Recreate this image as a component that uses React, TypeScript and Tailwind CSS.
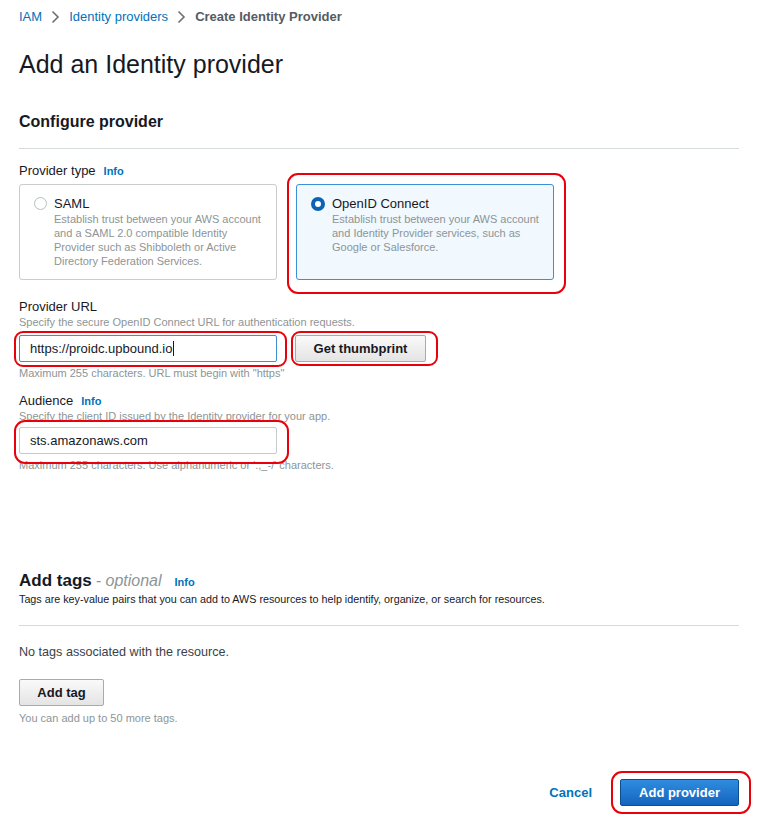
import React from "react";

const font = { fontFamily: '"Liberation Sans", Arial, sans-serif' };

const Chevron = () => (
    <svg width="9" height="14" viewBox="0 0 9 14" className="mx-[9px]">
        <path d="M1.5 1.5 L7 7 L1.5 12.5" fill="none" stroke="#687078" strokeWidth="1.6" />
    </svg>
);

const Info = ({ className = "ml-[8px]" }: { className?: string }) => (
    <span className={`text-[11px] font-bold text-[#0073bb] ${className}`}>Info</span>
);

const Radio = ({ checked }: { checked: boolean }) =>
    checked ? (
        <span className="mt-[1px] w-[14px] h-[14px] rounded-full border-[4px] border-[#0b63b5] bg-white shrink-0" />
    ) : (
        <span className="mt-[1px] w-[13px] h-[13px] rounded-full border border-[#b6bfc0] bg-white shrink-0" />
    );

const TypeCard = ({
    title,
    desc,
    checked,
}: {
    title: string;
    desc: string;
    checked: boolean;
}) => (
    <div
        className={`w-[258px] h-[96px] rounded-[3px] border flex gap-[7px] pl-[14px] pr-[10px] pt-[11px] ${
            checked ? "bg-[#f1f8fe] border-[#3f8fd6]" : "bg-white border-[#c9cccc]"
        }`}
    >
        <Radio checked={checked} />
        <div>
            <div className="text-[13px] leading-[16px] text-[#16191f]">{title}</div>
            <div className="text-[11px] leading-[14px] text-[#8d9596]">{desc}</div>
        </div>
    </div>
);

const RedBox = ({ l, t, w, h, r = 9 }: { l: number; t: number; w: number; h: number; r?: number }) => (
    <div
        className="absolute border-2 border-[#e8000b] pointer-events-none"
        style={{ left: l, top: t, width: w, height: h, borderRadius: r }}
    />
);

const GrayButton = ({ label, w }: { label: string; w: string }) => (
    <button
        className={`${w} h-[27px] rounded-[2px] border border-[#a8aaab] bg-linear-to-b from-[#fafafa] to-[#e4e4e4] text-[13px] font-bold text-[#16191f]`}
    >
        {label}
    </button>
);

export default function App() {
    return (
        <div className="relative w-[764px] h-[825px] bg-white text-[#16191f]" style={font}>
            <div className="pl-[19px] pt-[9px] w-[739px]">
                {/* breadcrumb */}
                <div className="flex items-center h-[16px] text-[13px]">
                    <span className="text-[#0073bb]">IAM</span>
                    <Chevron />
                    <span className="text-[#0073bb]">Identity providers</span>
                    <Chevron />
                    <span className="font-bold text-[#545b64]">Create Identity Provider</span>
                </div>

                <h1 className="mt-[24px] text-[25px] leading-[30px] text-[#16191f]">Add an Identity provider</h1>

                <h2 className="mt-[34px] text-[16px] leading-[18px] font-bold text-[#16191f]">Configure provider</h2>
                <div className="mt-[17px] h-px bg-[#d5dbdb]" />

                <div className="mt-[14px] flex items-center text-[13px] leading-[16px] text-[#16191f]">
                    Provider type <Info />
                </div>
                <div className="mt-[5px] flex gap-[19px]">
                    <TypeCard
                        title="SAML"
                        checked={false}
                        desc="Establish trust between your AWS account and a SAML 2.0 compatible Identity Provider such as Shibboleth or Active Directory Federation Services."
                    />
                    <TypeCard
                        title="OpenID Connect"
                        checked
                        desc="Establish trust between your AWS account and Identity Provider services, such as Google or Salesforce."
                    />
                </div>

                <div className="mt-[18px] text-[13px] leading-[17px]">Provider URL</div>
                <div className="text-[11px] leading-[14px] text-[#8d9596]">
                    Specify the secure OpenID Connect URL for authentication requests.
                </div>
                <div className="mt-[6px] flex gap-[18px]">
                    <div className="w-[258px] h-[27px] rounded-[2px] border border-[#3f8fd6] flex items-center pl-[10px] text-[13px]">
                        https://proidc.upbound.io<span className="w-px h-[15px] bg-[#16191f] ml-px" />
                    </div>
                    <GrayButton label="Get thumbprint" w="w-[131px]" />
                </div>
                <div className="mt-[4px] text-[11px] leading-[14px] text-[#8d9596]">
                    Maximum 255 characters. URL must begin with "https"
                </div>

                <div className="mt-[13px] flex items-center text-[13px] leading-[16px]">
                    Audience <Info />
                </div>
                <div className="text-[11px] leading-[14px] text-[#8d9596]">
                    Specify the client ID issued by the Identity provider for your app.
                </div>
                <div className="mt-[4px] w-[258px] h-[27px] rounded-[2px] border border-[#c6cbcc] flex items-center pl-[10px] text-[13px]">
                    sts.amazonaws.com
                </div>
                <div className="mt-[4px] text-[11px] leading-[14px] text-[#8d9596]">
                    Maximum 255 characters. Use alphanumeric or '.,_-/' characters.
                </div>

                {/* tags */}
                <div className="mt-[99px] flex items-baseline leading-[20px]">
                    <span className="font-bold text-[17px]">Add tags</span>
                    <span className="italic text-[16px] text-[#8d9596] ml-[4px]">- optional</span>
                    <Info className="ml-[13px]" />
                </div>
                <div className="text-[10.75px] leading-[14px] text-[#16191f]">
                    Tags are key-value pairs that you can add to AWS resources to help identify, organize, or search for resources.
                </div>
                <div className="mt-[19px] h-px bg-[#d5dbdb]" />
                <div className="mt-[18px] text-[12.6px] leading-[16px] text-[#3b4148]">No tags associated with the resource.</div>
                <div className="mt-[19px]">
                    <GrayButton label="Add tag" w="w-[85px]" />
                </div>
                <div className="mt-[5px] text-[11px] leading-[14px] text-[#8d9596]">You can add up to 50 more tags.</div>

                <div className="mt-[54px] flex justify-end items-center gap-[28px]">
                    <span className="text-[13px] font-bold text-[#0073bb]">Cancel</span>
                    <button className="w-[119px] h-[27px] rounded-[2px] border border-[#0c4f8f] bg-linear-to-b from-[#2f8de0] to-[#1464bd] text-[13px] font-bold text-white">
                        Add provider
                    </button>
                </div>
            </div>

            {/* annotation outlines */}
            <RedBox l={287} t={173} w={279} h={121} r={11} />
            <RedBox l={14} t={331} w={273} h={36} />
            <RedBox l={291} t={331} w={147} h={35} />
            <RedBox l={14} t={420} w={275} h={44} r={11} />
            <RedBox l={611} t={771} w={140} h={43} r={11} />
        </div>
    );
}
